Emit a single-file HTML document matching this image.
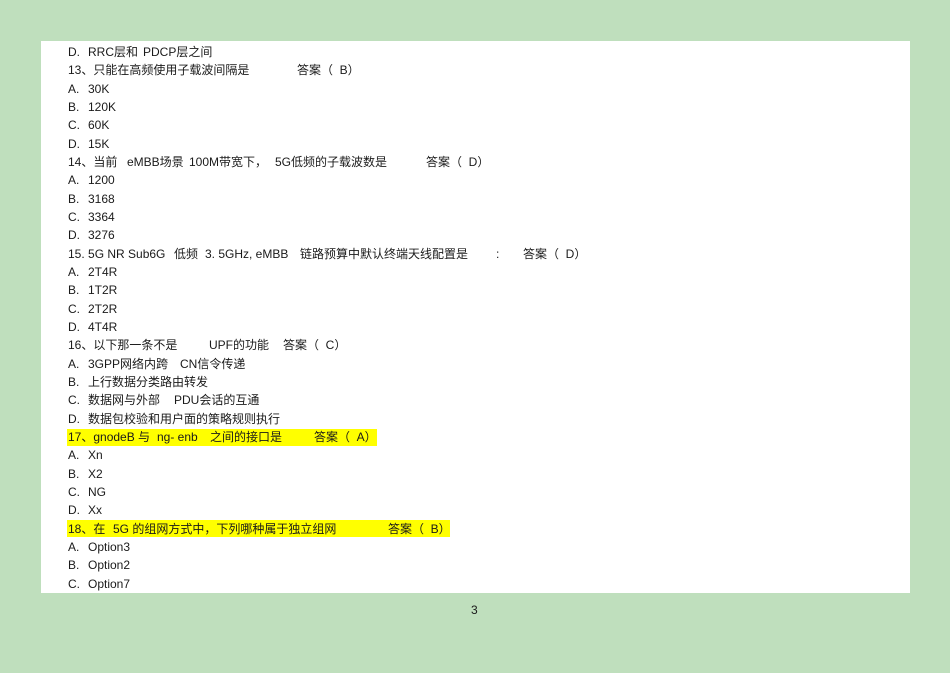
<!DOCTYPE html>
<html><head><meta charset="utf-8"><style>
body{margin:0;width:950px;height:672px;background:#bfdfbd;position:relative;overflow:hidden;font-family:"Liberation Sans","Noto Sans CJK SC",sans-serif;font-size:12px;color:#1a1a1a}
#pg{position:absolute;left:41px;top:41px;width:869px;height:552px;background:#fff}
#c{position:absolute;left:0;top:1px;width:950px;height:672px}
.l{position:absolute;left:0;height:18px;line-height:18px;white-space:pre;width:950px}
.l span{position:absolute;top:0}
.hl{position:absolute;background:#ffff00;height:17px}
</style></head><body>
<div id="pg"></div>
<div id="c">
<div class="hl" style="left:67px;top:428px;width:310px"></div>
<div class="hl" style="left:67px;top:519px;width:383px"></div>
<div class="l" style="top:42px"><span style="left:68px">D.</span><span style="left:88px">RRC层和</span><span style="left:143px">PDCP层之间</span></div>
<div class="l" style="top:60px"><span style="left:68px">13、只能在高频使用子载波间隔是</span><span style="left:297px">答案（  B）</span></div>
<div class="l" style="top:79px"><span style="left:68px">A.</span><span style="left:88px">30K</span></div>
<div class="l" style="top:97px"><span style="left:68px">B.</span><span style="left:88px">120K</span></div>
<div class="l" style="top:115px"><span style="left:68px">C.</span><span style="left:88px">60K</span></div>
<div class="l" style="top:134px"><span style="left:68px">D.</span><span style="left:88px">15K</span></div>
<div class="l" style="top:152px"><span style="left:68px">14、当前</span><span style="left:127px">eMBB场景</span><span style="left:189px">100M带宽下，</span><span style="left:275px">5G低频的子载波数是</span><span style="left:426px">答案（  D）</span></div>
<div class="l" style="top:170px"><span style="left:68px">A.</span><span style="left:88px">1200</span></div>
<div class="l" style="top:189px"><span style="left:68px">B.</span><span style="left:88px">3168</span></div>
<div class="l" style="top:207px"><span style="left:68px">C.</span><span style="left:88px">3364</span></div>
<div class="l" style="top:225px"><span style="left:68px">D.</span><span style="left:88px">3276</span></div>
<div class="l" style="top:244px"><span style="left:68px">15. 5G NR Sub6G</span><span style="left:174px">低频</span><span style="left:205px">3. 5GHz, eMBB</span><span style="left:300px">链路预算中默认终端天线配置是</span><span style="left:496px">:</span><span style="left:523px">答案（  D）</span></div>
<div class="l" style="top:262px"><span style="left:68px">A.</span><span style="left:88px">2T4R</span></div>
<div class="l" style="top:280px"><span style="left:68px">B.</span><span style="left:88px">1T2R</span></div>
<div class="l" style="top:299px"><span style="left:68px">C.</span><span style="left:88px">2T2R</span></div>
<div class="l" style="top:317px"><span style="left:68px">D.</span><span style="left:88px">4T4R</span></div>
<div class="l" style="top:335px"><span style="left:68px">16、以下那一条不是</span><span style="left:209px">UPF的功能</span><span style="left:283px">答案（  C）</span></div>
<div class="l" style="top:354px"><span style="left:68px">A.</span><span style="left:88px">3GPP网络内跨</span><span style="left:180px">CN信令传递</span></div>
<div class="l" style="top:372px"><span style="left:68px">B.</span><span style="left:88px">上行数据分类路由转发</span></div>
<div class="l" style="top:390px"><span style="left:68px">C.</span><span style="left:88px">数据网与外部</span><span style="left:174px">PDU会话的互通</span></div>
<div class="l" style="top:409px"><span style="left:68px">D.</span><span style="left:88px">数据包校验和用户面的策略规则执行</span></div>
<div class="l" style="top:427px"><span style="left:68px">17、gnodeB 与</span><span style="left:157px">ng- enb</span><span style="left:210px">之间的接口是</span><span style="left:314px">答案（  A）</span></div>
<div class="l" style="top:445px"><span style="left:68px">A.</span><span style="left:88px">Xn</span></div>
<div class="l" style="top:464px"><span style="left:68px">B.</span><span style="left:88px">X2</span></div>
<div class="l" style="top:482px"><span style="left:68px">C.</span><span style="left:88px">NG</span></div>
<div class="l" style="top:500px"><span style="left:68px">D.</span><span style="left:88px">Xx</span></div>
<div class="l" style="top:519px"><span style="left:68px">18、在</span><span style="left:113px">5G 的组网方式中，下列哪种属于独立组网</span><span style="left:388px">答案（  B）</span></div>
<div class="l" style="top:537px"><span style="left:68px">A.</span><span style="left:88px">Option3</span></div>
<div class="l" style="top:555px"><span style="left:68px">B.</span><span style="left:88px">Option2</span></div>
<div class="l" style="top:574px"><span style="left:68px">C.</span><span style="left:88px">Option7</span></div>
<div class="l" style="top:600px"><span style="left:471px">3</span></div>
</div>
</body></html>
